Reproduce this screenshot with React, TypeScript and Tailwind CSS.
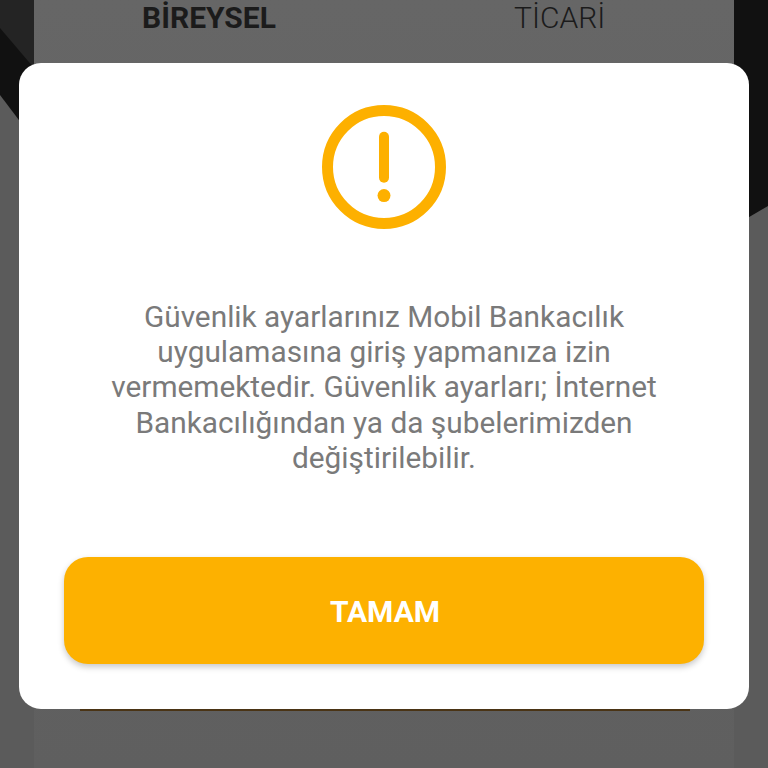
import React from 'react';

const Backdrop = () => (
  <svg className="absolute inset-0 w-full h-full" viewBox="0 0 768 768">
    <rect width="768" height="768" fill="#5b5b5b" />
    <polygon points="0,0 768,0 768,206 734,226 34,140 0,95" fill="#111111" />
    <polygon points="0,0 34,0 34,68 0,28" fill="#242424" />
  </svg>
);

const AlertIcon = () => (
  <svg width="124" height="124" viewBox="0 0 124 124" fill="none">
    <circle cx="62" cy="62" r="56.5" stroke="#fdb000" strokeWidth="11" />
    <line x1="62" y1="31.7" x2="62" y2="72.7" stroke="#fdb000" strokeWidth="10" strokeLinecap="round" />
    <circle cx="62" cy="90.6" r="6.5" fill="#fdb000" />
  </svg>
);

export default function App() {
  return (
    <div className="relative w-[768px] h-[768px] overflow-hidden font-['Roboto',sans-serif]">
      <Backdrop />

      <div className="relative mx-[34px] h-[768px] bg-gradient-to-b from-[#666666] to-[#5f5f5f]">
        <div className="flex h-[36px] items-center text-[30px] leading-[36px] text-[#1b1b1b]">
          <div className="w-[350px] pl-[108px] font-bold">BİREYSEL</div>
          <div className="w-[350px] pl-[130px] font-light">TİCARİ</div>
        </div>
        <div className="absolute left-[46px] top-[700px] h-[11px] w-[610px] bg-[#4a3415]" />
      </div>

      {/* modal */}
      <div className="absolute left-[19px] top-[63px] flex h-[646px] w-[730px] flex-col items-center rounded-[22px] bg-white px-[45px] pt-[42px]">
        <AlertIcon />
        <p className="mt-[70px] w-[600px] text-center text-[29.8px] leading-[35.2px] text-[#7a7a7a]">
          Güvenlik ayarlarınız Mobil Bankacılık uygulamasına giriş yapmanıza izin vermemektedir. Güvenlik ayarları; İnternet Bankacılığından ya da şubelerimizden değiştirilebilir.
        </p>
        <button className="mt-[82px] flex h-[107px] w-[640px] shrink-0 items-center justify-center rounded-[24px] bg-[#fdb100] pl-[2px] pt-[2px] text-[30px] font-bold text-white shadow-[0_3px_6px_rgba(0,0,0,0.22)]">
          TAMAM
        </button>
      </div>
    </div>
  );
}
